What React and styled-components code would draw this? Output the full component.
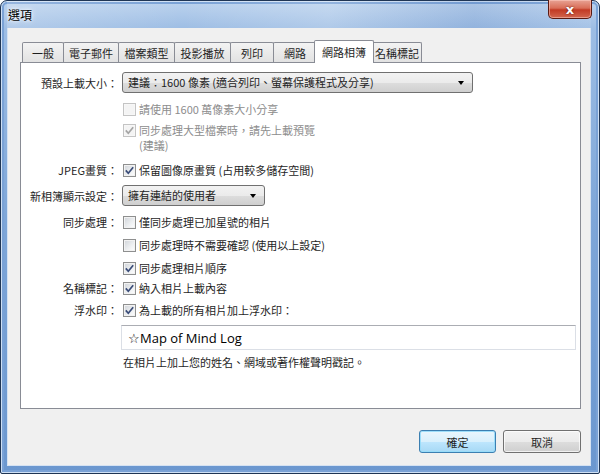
import styled, { createGlobalStyle } from "styled-components";

const GlobalStyle = createGlobalStyle`
  body {
    margin: 0;
    background: #ffffff;
  }
`;

const font = `"Noto Sans CJK TC", "Noto Sans", sans-serif`;

// window frame //
const Window = styled.div`
  box-sizing: border-box;
  width: 600px;
  height: 474px;
  display: flex;
  flex-direction: column;
  padding: 0 8px 7px 6px;
  border: 1px solid #1f3554;
  border-radius: 7px 7px 2px 2px;
  background: linear-gradient(
    to bottom,
    #bcd3ee 0px,
    #9dbde4 28px,
    #7ea6d8 220px,
    #6b97cf 100%
  );
  box-shadow: inset 0 0 0 1px #cfe0f4, inset 0 0 0 3px #7aa2d6;
  font-family: ${font};
  font-size: 11px;
  color: #1e1e1e;
`;

const TitleBar = styled.div`
  height: 27px;
  display: flex;
  align-items: center;
  padding-left: 1px;
  background: linear-gradient(
    to right,
    rgba(255, 255, 255, 0.2) 0%,
    rgba(255, 255, 255, 0) 30%,
    rgba(255, 255, 255, 0.18) 55%,
    rgba(60, 100, 170, 0.12) 80%,
    rgba(255, 255, 255, 0.08) 100%
  );
`;

const Title = styled.div`
  font-size: 12px;
  color: #000;
  text-shadow: 0 0 6px #fff, 0 0 3px #fff;
`;

const CloseButton = styled.div`
  margin-left: auto;
  margin-right: -1px;
  align-self: flex-start;
  margin-top: -1px;
  width: 44px;
  height: 19px;
  box-sizing: border-box;
  border: 1px solid #5a1a12;
  border-top: none;
  border-radius: 0 0 5px 5px;
  background: linear-gradient(
    to bottom,
    #e8a394 0%,
    #d96e58 45%,
    #c23a24 55%,
    #d2674f 100%
  );
  box-shadow: inset 0 0 0 1px rgba(255, 210, 200, 0.5);
  display: flex;
  align-items: center;
  justify-content: center;
  color: #fff;
  font-family: "DejaVu Sans", sans-serif;
  font-weight: bold;
  font-size: 13px;
  text-shadow: 0 0 2px #4a0c04;
`;

const Client = styled.div`
  flex: 1;
  display: flex;
  flex-direction: column;
  background: #f0f0f0;
  padding: 14px 9px 0 12px;
  border: 1px solid #d5e2f2;
  border-top: none;
  box-sizing: border-box;
`;

// tabs //
const TabRow = styled.div`
  display: flex;
  align-items: flex-end;
  height: 20px;
  padding-left: 2px;
`;

const Tab = styled.div`
  box-sizing: border-box;
  width: ${(p) => p.w}px;
  height: ${(p) => (p.active ? 23 : 20)}px;
  margin: 0 ${(p) => (p.active ? -2 : -1)}px -${(p) => (p.active ? 1 : 0)}px
    ${(p) => (p.active ? -2 : 0)}px;
  border: 1px solid #898c95;
  border-bottom: none;
  border-radius: 2px 2px 0 0;
  background: ${(p) =>
    p.active ? "#ffffff" : "linear-gradient(to bottom, #f3f3f3, #e2e2e2)"};
  position: relative;
  z-index: ${(p) => (p.active ? 2 : 1)};
  display: flex;
  align-items: center;
  justify-content: center;
  padding-top: ${(p) => (p.active ? 0 : 1)}px;
  white-space: nowrap;
`;

const Panel = styled.div`
  box-sizing: border-box;
  height: 347px;
  background: #ffffff;
  border: 1px solid #898c95;
  display: flex;
  flex-direction: column;
`;

// form rows //
const Row = styled.div`
  display: flex;
  align-items: ${(p) => (p.top ? "flex-start" : "center")};
  margin-top: ${(p) => p.mt}px;
  min-height: 20px;
  line-height: ${(p) => (p.lh ? p.lh : 20)}px;
`;

const Label = styled.div`
  width: 97px;
  flex-shrink: 0;
  margin-right: 5px;
  text-align: right;
  white-space: nowrap;
`;

const CheckLine = styled.div`
  display: flex;
  align-items: ${(p) => (p.top ? "flex-start" : "center")};
  color: ${(p) => (p.disabled ? "#8d8d8d" : "#1e1e1e")};
`;

const Box = styled.div`
  box-sizing: border-box;
  width: 13px;
  height: 13px;
  flex-shrink: 0;
  margin-right: 3px;
  margin-top: ${(p) => (p.top ? 1 : 0)}px;
  border: 1px solid ${(p) => (p.disabled ? "#c4c4c4" : "#8e8f8f")};
  background: ${(p) =>
    p.disabled
      ? "#f4f4f4"
      : "linear-gradient(135deg, #cfd3d8 0%, #eef0f2 60%, #ffffff 100%)"};
  box-shadow: inset 0 0 0 1px ${(p) => (p.disabled ? "#f7f7f7" : "#f2f2f2")};
  display: flex;
  align-items: center;
  justify-content: center;
`;

const Select = styled.div`
  box-sizing: border-box;
  width: ${(p) => p.w}px;
  height: 21px;
  margin-left: -1px;
  border: 1px solid #707070;
  border-radius: 3px;
  background: linear-gradient(
    to bottom,
    #f2f2f2 0%,
    #ebebeb 50%,
    #dddddd 51%,
    #cfcfcf 100%
  );
  display: flex;
  align-items: center;
  padding: 0 8px 0 5px;
  line-height: 19px;
`;

const SelectText = styled.span`
  flex: 1;
  white-space: nowrap;
`;

const Arrow = styled.span`
  width: 0;
  height: 0;
  border-left: 3.5px solid transparent;
  border-right: 3.5px solid transparent;
  border-top: 4px solid #000;
`;

const TextBox = styled.div`
  box-sizing: border-box;
  width: 455px;
  height: 25px;
  margin-left: -2px;
  border: 1px solid #dbdfe6;
  border-top-color: #abadb3;
  background: #fff;
  display: flex;
  align-items: center;
  padding-left: 6px;
  font-family: "Open Sans", "Noto Sans", sans-serif;
  font-size: 13px;
  color: #000;
`;

const Hint = styled.div`
  white-space: nowrap;
`;

// buttons //
const ButtonRow = styled.div`
  display: flex;
  justify-content: flex-end;
  gap: 7px;
  margin-top: 21px;
`;

const Button = styled.div`
  box-sizing: border-box;
  width: ${(p) => (p.primary ? 77 : 78)}px;
  height: 23px;
  border-radius: 3px;
  border: 1px solid ${(p) => (p.primary ? "#3c7fb1" : "#707070")};
  background: ${(p) =>
    p.primary
      ? "linear-gradient(to bottom, #eaf6fd 0%, #d9f0fc 50%, #bee6fd 51%, #a7d9f5 100%)"
      : "linear-gradient(to bottom, #f2f2f2 0%, #ebebeb 50%, #dddddd 51%, #cfcfcf 100%)"};
  box-shadow: inset 0 0 0 1px
    ${(p) => (p.primary ? "rgba(150, 220, 250, 0.9)" : "rgba(255,255,255,0.7)")};
  display: flex;
  align-items: center;
  justify-content: center;
  color: #1e1e1e;
`;

const Check = ({ on, disabled, top, children }) => (
  <CheckLine disabled={disabled} top={top}>
    <Box disabled={disabled} top={top}>
      {on && (
        <svg width="11" height="11" viewBox="0 0 11 11">
          <path
            d="M1.8 5.4 L4.3 8.2 L9.2 2.2"
            fill="none"
            stroke={disabled ? "#a4a4a4" : "#3a4c78"}
            strokeWidth="1.7"
          />
        </svg>
      )}
    </Box>
    <div>{children}</div>
  </CheckLine>
);

const tabs = [
  ["一般", 42],
  ["電子郵件", 56],
  ["檔案類型", 57],
  ["投影播放", 57],
  ["列印", 44],
  ["網路", 44],
  ["網路相簿", 60],
  ["名稱標記", 50],
];

const App = () => {
  return (
    <>
      <GlobalStyle />
      <Window>
        <TitleBar>
          <Title>選項</Title>
          <CloseButton>x</CloseButton>
        </TitleBar>
        <Client>
          <TabRow>
            {tabs.map(([name, w]) => (
              <Tab key={name} w={w} active={name === "網路相簿"}>
                {name}
              </Tab>
            ))}
          </TabRow>
          <Panel>
            <Row mt={9}>
              <Label>預設上載大小：</Label>
              <Select w={351}>
                <SelectText>建議：1600 像素 (適合列印、螢幕保護程式及分享)</SelectText>
                <Arrow />
              </Select>
            </Row>
            <Row mt={6}>
              <Label />
              <Check disabled>請使用 1600 萬像素大小分享</Check>
            </Row>
            <Row mt={4} lh={15} top>
              <Label />
              <Check on disabled top>
                同步處理大型檔案時，請先上載預覽
                <br />
                (建議)
              </Check>
            </Row>
            <Row mt={7}>
              <Label>JPEG畫質：</Label>
              <Check on>保留圖像原畫質 (占用較多儲存空間)</Check>
            </Row>
            <Row mt={5}>
              <Label>新相簿顯示設定：</Label>
              <Select w={143}>
                <SelectText>擁有連結的使用者</SelectText>
                <Arrow />
              </Select>
            </Row>
            <Row mt={6}>
              <Label>同步處理：</Label>
              <Check>僅同步處理已加星號的相片</Check>
            </Row>
            <Row mt={3}>
              <Label />
              <Check>同步處理時不需要確認 (使用以上設定)</Check>
            </Row>
            <Row mt={3}>
              <Label />
              <Check on>同步處理相片順序</Check>
            </Row>
            <Row mt={0}>
              <Label>名稱標記：</Label>
              <Check on>納入相片上載內容</Check>
            </Row>
            <Row mt={2}>
              <Label>浮水印：</Label>
              <Check on>為上載的所有相片加上浮水印：</Check>
            </Row>
            <Row mt={5}>
              <Label />
              <TextBox>☆Map of Mind Log</TextBox>
            </Row>
            <Row mt={2}>
              <Label />
              <Hint>在相片上加上您的姓名、網域或著作權聲明戳記。</Hint>
            </Row>
          </Panel>
          <ButtonRow>
            <Button primary>確定</Button>
            <Button>取消</Button>
          </ButtonRow>
        </Client>
      </Window>
    </>
  );
};

export default App;
